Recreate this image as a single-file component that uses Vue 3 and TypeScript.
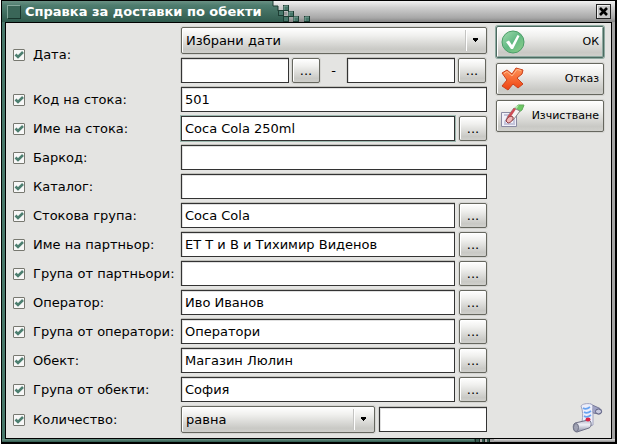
<script setup lang="ts">
import { reactive, ref } from 'vue'

interface Field {
  id: string
  label: string
  value: string
  browse: boolean
  focused?: boolean
}

const fields = reactive<Field[]>([
  { id: 'code', label: 'Код на стока:', value: '501', browse: false },
  { id: 'name', label: 'Име на стока:', value: 'Coca Cola 250ml', browse: true, focused: true },
  { id: 'barcode', label: 'Баркод:', value: '', browse: false },
  { id: 'catalog', label: 'Каталог:', value: '', browse: false },
  { id: 'group', label: 'Стокова група:', value: 'Coca Cola', browse: true },
  { id: 'partner', label: 'Име на партньор:', value: 'ЕТ Т и В и Тихимир Виденов', browse: true },
  { id: 'partners', label: 'Група от партньори:', value: '', browse: true },
  { id: 'operator', label: 'Оператор:', value: 'Иво Иванов', browse: true },
  { id: 'operators', label: 'Група от оператори:', value: 'Оператори', browse: true },
  { id: 'object', label: 'Обект:', value: 'Магазин Люлин', browse: true },
  { id: 'objects', label: 'Група от обекти:', value: 'София', browse: true },
])
const dateFrom = ref('')
const dateTo = ref('')
const quantity = ref('')
</script>

<template>
  <main class="window">
    <header class="title-bar">
      <div class="title-main">
        <span class="menu-box"></span>
        <h1>Справка за доставки по обекти</h1>
      </div>
      <svg class="tiles" width="42" height="21" viewBox="0 0 42 21" aria-hidden="true">
        <defs>
          <linearGradient id="bar" x1="0" y1="0" x2="0" y2="1">
            <stop offset="0" stop-color="#6a9184" />
            <stop offset="0.2" stop-color="#4f7d6f" />
            <stop offset="1" stop-color="#2f5a4d" />
          </linearGradient>
        </defs>
        <path d="M0 0H3V5H8V10H13V16H18V21H0Z" fill="url(#bar)" />
        <path d="M3 0V5H8V10" fill="none" stroke="#1c3a31" />
        <g fill="#47776a" stroke="#1d3d33">
          <rect x="13.500" y="4.500" width="5" height="5" />
          <rect x="8.500" y="9.500" width="5" height="5" />
          <rect x="18.500" y="10.500" width="5" height="5" />
          <rect x="13.500" y="15.500" width="5" height="5" />
          <rect x="23.500" y="15.500" width="5" height="5" />
          <rect x="34.500" y="15.500" width="5" height="5" />
        </g>
        <path d="M14 9V5H18M19 15V11H23M24 20V16H28M35 20V16H39" fill="none" stroke="#7fa599" />
        <rect x="14" y="11" width="3" height="3" fill="#9a9a9a" />
      </svg>
      <button class="close" type="button" aria-label="X">
        <svg width="9" height="9" viewBox="0 0 9 9"><path d="M1 1L8 8M8 1L1 8" stroke="#000" stroke-width="2.600" /></svg>
      </button>
    </header>

    <div class="body">
      <form class="form" @submit.prevent>
        <div class="row">
          <input id="use-date" class="check" type="checkbox" checked />
          <label for="use-date">Дата:</label>
          <div class="dates">
            <div class="combo">
              <select aria-label="Дата"><option>Избрани дати</option></select>
              <svg class="arrow" width="28" height="21" viewBox="0 0 28 21" aria-hidden="true">
                <path d="M6.500 0V21" stroke="#c4c4c2" /><path d="M7.500 0V21" stroke="#fff" /><path d="M14 8H19V10H18V11H17V12H16V11H15V10H14Z" />
              </svg>
            </div>
            <div class="range">
              <input v-model="dateFrom" class="field" type="text" aria-label="Дата" />
              <button class="browse" type="button">...</button>
              <span class="dash">-</span>
              <input v-model="dateTo" class="field" type="text" aria-label="Дата" />
              <button class="browse" type="button">...</button>
            </div>
          </div>
        </div>

        <div v-for="f in fields" :key="f.id" class="row">
          <input :id="'use-' + f.id" class="check" type="checkbox" checked />
          <label :for="'use-' + f.id">{{ f.label }}</label>
          <div class="controls">
            <input v-model="f.value" class="field" :class="{ focused: f.focused }" type="text" :aria-label="f.label" />
            <button v-if="f.browse" class="browse" type="button">...</button>
          </div>
        </div>

        <div class="row">
          <input id="use-quantity" class="check" type="checkbox" checked />
          <label for="use-quantity">Количество:</label>
          <div class="controls">
            <div class="combo">
              <select aria-label="Количество"><option>равна</option></select>
              <svg class="arrow" width="28" height="21" viewBox="0 0 28 21" aria-hidden="true">
                <path d="M6.500 0V21" stroke="#c4c4c2" /><path d="M7.500 0V21" stroke="#fff" /><path d="M14 8H19V10H18V11H17V12H16V11H15V10H14Z" />
              </svg>
            </div>
            <input v-model="quantity" class="field amount" type="text" aria-label="Количество" />
          </div>
        </div>
      </form>

      <aside class="actions">
        <button class="action default" type="button">
          <svg width="24" height="24" viewBox="0 0 24 24" aria-hidden="true">
            <defs>
              <linearGradient id="ok" x1="0" y1="0" x2="1" y2="1">
                <stop offset="0" stop-color="#a3dcb0" />
                <stop offset="0.500" stop-color="#62b983" />
                <stop offset="1" stop-color="#91d08a" />
              </linearGradient>
            </defs>
            <circle cx="12" cy="12" r="11" fill="url(#ok)" stroke="#4b9e68" />
            <path d="M5 12L8 10.500L11 15L16.500 5L18.500 6L12 19H10Z" fill="#fff" />
          </svg>
          <span>ОК</span>
        </button>
        <button class="action" type="button">
          <svg width="24" height="24" viewBox="0 0 24 24" aria-hidden="true">
            <defs>
              <linearGradient id="no" x1="0" y1="0" x2="0" y2="1">
                <stop offset="0" stop-color="#ff9458" />
                <stop offset="1" stop-color="#ee4010" />
              </linearGradient>
            </defs>
            <path d="M1 6L6 3L11 7L15 1L22 3L21 7L16 11L22 17L17 21L12 17L7 23L1 19L6 13Z" fill="url(#no)" stroke="#c9401c" stroke-linejoin="round" />
            <path d="M3 6.500L6 4.500L11 9L16 2.500L20 3.500" fill="none" stroke="#ffb78c" />
          </svg>
          <span>Отказ</span>
        </button>
        <button class="action" type="button">
          <svg width="24" height="24" viewBox="0 0 24 24" aria-hidden="true">
            <path d="M.5 8.500H15.500V22.500H.5Z" fill="#f0f0f8" stroke="#8a8aa2" />
            <path d="M3 11H8L4 18V20H13V15" fill="none" stroke="#c5c5dc" stroke-width="2" />
            <path d="M13 5L17 1L23 1L21 6L18 8Z" fill="#6cc863" stroke="#62aa5c" />
            <path d="M15 2L18 1L15 6L13 5Z" fill="#b4e5ae" />
            <path d="M7 12L13 4L19 7L13 15L9 18L5 17Z" fill="#f4f4f4" stroke="#858585" />
            <path d="M7 12L13 4L15 5L9 14L7 18L5 17Z" fill="#ce4c55" />
            <path d="M5 17C6 14 9 11 12 13C13 16 9 19 7 19Z" fill="#f1b6b6" stroke="#8d3a40" />
          </svg>
          <span>Изчистване</span>
        </button>

        <svg class="scroll" width="32" height="32" viewBox="0 0 32 32" aria-hidden="true">
          <defs>
            <linearGradient id="roll" x1="0" y1="0" x2="0" y2="1">
              <stop offset="0" stop-color="#b5b6c8" />
              <stop offset="0.4" stop-color="#f0f0f7" />
              <stop offset="1" stop-color="#8588a0" />
            </linearGradient>
          </defs>
          <path d="M18 3L27 7C30 8 31 13 27 13L21 12Z" fill="#9fa2c5" stroke="#777a98" />
          <ellipse cx="26.500" cy="10.500" rx="3" ry="2.500" fill="#c7c9dd" stroke="#5d5f80" />
          <path d="M9 5C10 3 15 2 19 3C22 4 20 8 21 13L21 24L13 26L10 21C11 15 11 10 9 5Z" fill="#eceefb" stroke="#a0a2bd" />
          <path d="M3 22L16 19C20 19 20 26 17 27L5 31C1 31 0 24 3 22Z" fill="url(#roll)" stroke="#6e7085" />
          <ellipse cx="4" cy="26.500" rx="2.500" ry="4" fill="#a0a2b3" stroke="#707386" />
          <path d="M11 7Q14 9 18 6M12 11Q15 13 19 10M12 15Q15 17 19 14" fill="none" stroke="#68a3f0" stroke-width="1.700" />
          <ellipse cx="16" cy="18.500" rx="2.500" ry="2" fill="#dc2547" />
        </svg>
      </aside>
    </div>
    <footer class="bottom-edge">
      <span class="edge-green"></span>
      <svg width="20" height="3" viewBox="0 0 20 3" aria-hidden="true">
        <rect width="20" height="3" fill="#a5a5a5" />
        <path d="M0 0H1V3H0ZM2 0H5V3H2ZM8 0H10V3H8ZM13 0H15V3H13Z" fill="#35594e" />
        <path d="M1 0H2V3H1ZM5 0H6V3H5ZM10 0H11V3H10ZM15 0H16V3H15Z" fill="#152a23" />
      </svg>
    </footer>
  </main>
</template>

<style>
body {
  background: #fff;
}
</style>

<style scoped>
.window {
  box-sizing: border-box;
  margin: 0 3px 2px 1px;
  border: 1px solid #000;
  border-width: 1px 2px 2px 1px;
  background: #e4e4e2;
  color: #000;
  font: 13px/16px "DejaVu Sans", sans-serif;
}

.title-bar {
  display: flex;
  height: 21px;
  align-items: center;
  background: linear-gradient(#f2f2f2, #d0d0d0 30%, #a8a8a8 80%, #858585);
}

.title-main {
  display: flex;
  align-items: center;
  gap: 4px;
  height: 21px;
  padding: 0 8px 0 5px;
  background: linear-gradient(#6a9184, #4f7d6f 20%, #2f5a4d);
}

.menu-box {
  box-sizing: border-box;
  width: 14px;
  height: 14px;
  border: 1px solid;
  border-color: #86a99d #18352c #18352c #86a99d;
  background: #3a6658;
}

h1 {
  margin: 0;
  color: #fff;
  font-size: 13px;
  line-height: 16px;
  white-space: nowrap;
}

.close {
  display: grid;
  place-items: center;
  width: 15px;
  height: 15px;
  margin: 0 4px 0 auto;
  padding: 0;
  border: 1px solid #222;
  background: #c6c6c6;
  box-shadow: inset 1px 1px #eee;
}

.body {
  display: flex;
  gap: 9px;
  margin: 0 3px;
  padding: 4px 7px 5px;
  border: 1px solid #000;
  background: #e4e4e2;
  box-shadow: -3px 0 #47776a, 3px 0 #a2a2a2;
}

.form {
  display: flex;
  flex: 1;
  flex-direction: column;
  gap: 4px;
  min-width: 0;
}

.row {
  display: grid;
  grid-template-columns: 12px 140px minmax(0, 1fr);
  column-gap: 8px;
  align-items: center;
}

label {
  white-space: nowrap;
}

.check {
  appearance: none;
  box-sizing: border-box;
  width: 12px;
  height: 12px;
  margin: 0;
  border: 1px solid #777870;
  border-radius: 1px;
  background: #f7f7f7;
}

.check:checked {
  background: #f7f7f7 url("data:image/svg+xml,%3Csvg xmlns='http://www.w3.org/2000/svg' viewBox='0 0 10 10'%3E%3Cpath d='M1.500 4.500L4 7L9 2' fill='none' stroke='%234d7f70' stroke-width='2.600'/%3E%3C/svg%3E") center / 10px 10px no-repeat;
}

.dates {
  display: grid;
  gap: 4px;
}

.range,
.controls {
  display: flex;
  align-items: center;
  gap: 4px;
}

.range {
  gap: 3px;
  padding-right: 1px;
}

.dash {
  width: 21px;
  text-align: center;
}

.field {
  box-sizing: border-box;
  flex: 1;
  width: 0;
  min-width: 0;
  height: 25px;
  margin: 0;
  padding: 0 3px;
  border: 1px solid #333;
  border-radius: 0;
  outline: 0;
  background: #fff;
  color: #000;
  font: inherit;
  box-shadow: 0 -1px #c0c0bb, -1px 0 #d0d0cc, inset 1px 1px #e0e0e0;
}

.field.focused {
  box-shadow: 0 0 0 1px #9bb7ae;
}

.field.amount {
  flex: 0 0 108px;
}

.combo {
  position: relative;
  flex: 1;
}

.combo select,
.browse,
.action {
  box-sizing: border-box;
  border: 1px solid #66675f;
  border-radius: 2px;
  background: linear-gradient(#fff, #f0f0ee 30%, #c9c9c5 85%, #d0d0cc);
  color: #000;
  font: inherit;
  box-shadow: inset 1px 1px #fff, 0 0 0 1px #d5d5d2;
}

.combo select {
  display: block;
  appearance: none;
  width: 100%;
  height: 27px;
  padding: 0 30px 0 4px;
}

.arrow {
  position: absolute;
  top: 3px;
  right: 0;
  pointer-events: none;
}

.browse {
  flex: none;
  width: 28px;
  height: 25px;
  padding: 0;
}

.actions {
  display: flex;
  flex: none;
  flex-direction: column;
  gap: 5px;
  width: 108px;
}

.action {
  display: flex;
  align-items: center;
  justify-content: space-between;
  height: 32px;
  padding: 0 4px;
  font-size: 11px;
}

.action.default {
  margin-top: -1px;
  border-color: #4c6a60;
  box-shadow: inset 1px 1px #fff, inset 0 0 0 1px #8eaaa1, 0 0 0 1px #8eaaa1;
}

.scroll {
  align-self: flex-end;
  margin-top: auto;
}

.bottom-edge {
  display: flex;
  height: 3px;
  background: linear-gradient(#e0e0e0, #8a8a8a);
}

.edge-green {
  width: 77%;
  background: linear-gradient(#6a9184, #2f5a4d);
}
</style>
